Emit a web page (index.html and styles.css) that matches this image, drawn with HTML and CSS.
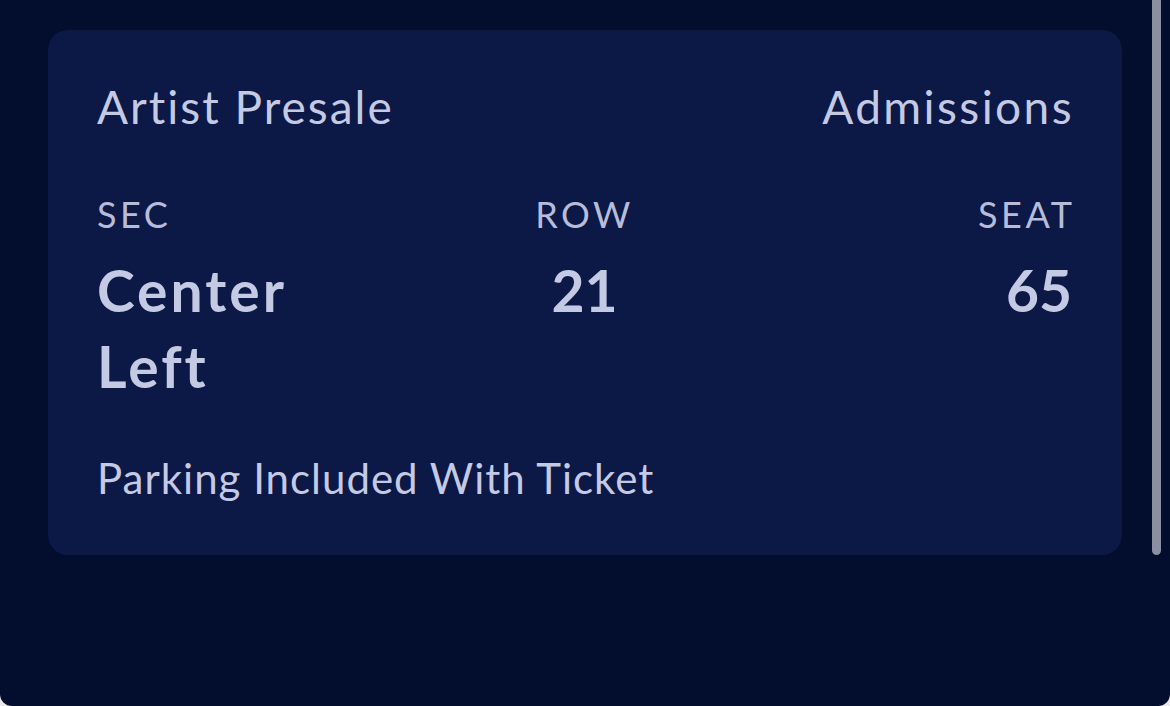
FILE: index.html
```html
<!DOCTYPE html>
<html lang="en">
<head>
    <meta charset="UTF-8">
    <meta name="viewport" content="width=device-width, initial-scale=1.0">
    <title>Ticket</title>
    <link rel="stylesheet" href="styles.css">
</head>
<body>
    <div class="screen">
        <div class="ticket">
            <div class="ticket-head">
                <span>Artist Presale</span>
                <span class="head-right">Admissions</span>
            </div>

            <div class="seat-info">
                <div class="col col-left">
                    <div class="label">SEC</div>
                    <div class="value value-wide">Center<br>Left</div>
                </div>
                <div class="col col-mid">
                    <div class="label">ROW</div>
                    <div class="value">21</div>
                </div>
                <div class="col col-right">
                    <div class="label">SEAT</div>
                    <div class="value">65</div>
                </div>
            </div>

            <p class="note">Parking Included With Ticket</p>
        </div>

        <div class="scrollbar"></div>
    </div>
</body>
</html>
```

FILE: styles.css
```css
html, body {
    margin: 0;
    height: 100%;
    background: #e9e9ee;
}

body {
    font-family: Lato, "Open Sans", sans-serif;
    color: #c4cae4;
}

.screen {
    position: relative;
    height: 706px;
    background-color: #030d2d;
    border-radius: 0 0 12px 12px;
    padding: 30px 48px 0 48px;
    box-sizing: border-box;
}

.ticket {
    background: #0c1846;
    border-radius: 20px;
    padding: 49px 50px 51px 49px;
    height: 525px;
    box-sizing: border-box;
}

.ticket-head {
    display: flex;
    justify-content: space-between;
    font-size: 46px;
    line-height: 56px;
    letter-spacing: 2px;
}

.head-right {
    letter-spacing: 2.4px;
    margin-right: -2px;
}

.seat-info {
    display: grid;
    grid-template-columns: 1fr auto 1fr;
    margin-top: 57px;
}

.col-mid {
    text-align: center;
}

.col-right {
    text-align: right;
}

.label {
    font-size: 36px;
    line-height: 44px;
    letter-spacing: 3.5px;
    color: #b7bdd8;
}

.col-right .label {
    margin-right: -3.5px;
}

.value {
    font-size: 57px;
    line-height: 76px;
    font-weight: 700;
    margin-top: 16px;
}

.value-wide {
    letter-spacing: 3px;
}

.note {
    margin: 49px 0 0 0;
    font-size: 42px;
    line-height: 50px;
    letter-spacing: 1px;
}

.scrollbar {
    position: absolute;
    top: 0;
    right: 9px;
    width: 9px;
    height: 555px;
    background: #8b8fa2;
    border-radius: 0 0 5px 5px;
}
```
